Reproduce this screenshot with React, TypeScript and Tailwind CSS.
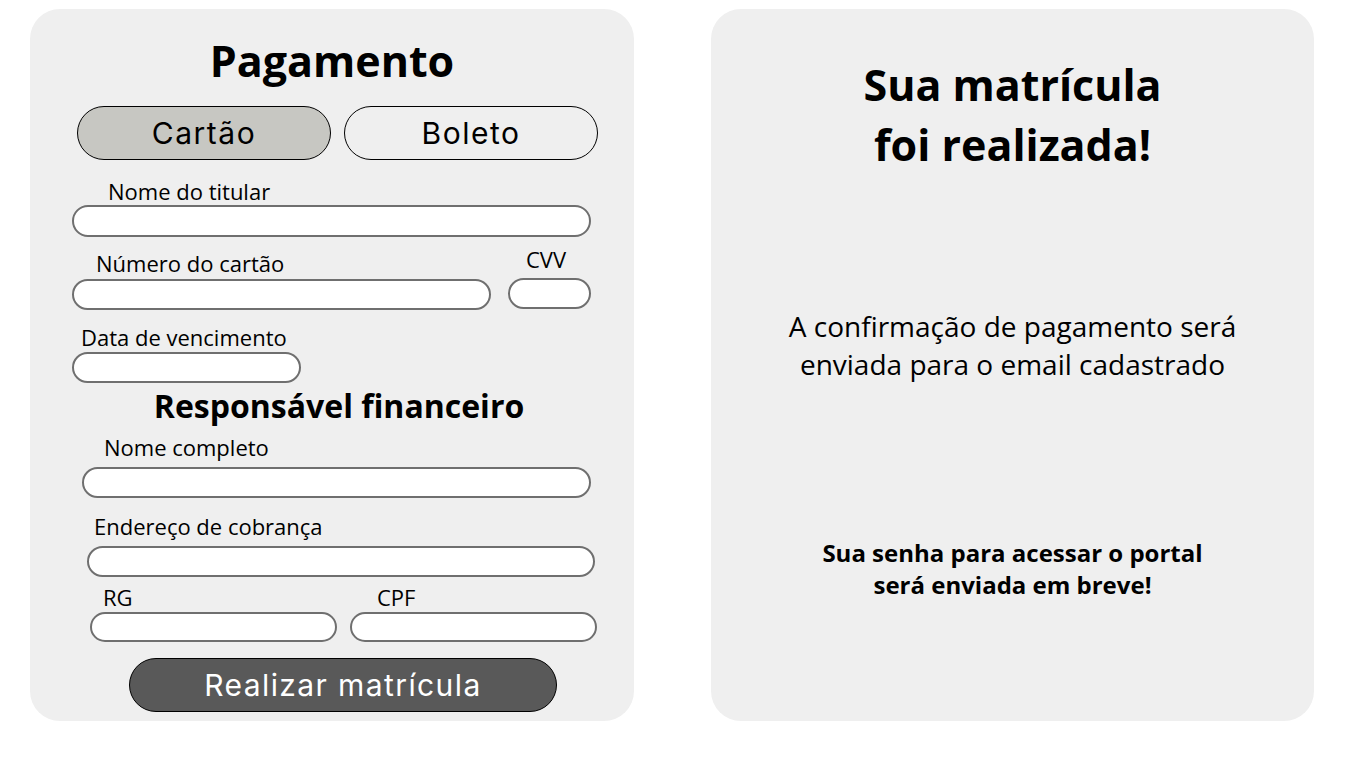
import React from "react";

const labelFont = { fontFamily: '"Open Sans", sans-serif' };

const Field: React.FC<{ className: string }> = ({ className }) => (
  <div className={`bg-white border-2 border-[#6f6f6f] rounded-full ${className}`} />
);

const Label: React.FC<{ text: string; className?: string }> = ({ text, className = "" }) => (
  <p className={`text-[22px] leading-[26px] text-black font-['Open_Sans',sans-serif] ${className}`}>{text}</p>
);

const PaymentCard: React.FC = () => {
  return (
    <div className="w-[604px] h-[712px] bg-[#efefef] rounded-[30px] flex flex-col font-['Open_Sans',sans-serif]">
      <h1 className="mt-[27px] text-center text-[43px] leading-[50px] font-bold text-black">Pagamento</h1>

      <div className="mt-[20px] ml-[47px] flex gap-[13px] font-['Inter',sans-serif]">
        <button className="w-[254px] h-[54px] rounded-full border border-black bg-[#c7c7c2] text-[30px] tracking-[1.5px] text-black">
          Cartão
        </button>
        <button className="w-[254px] h-[54px] rounded-full border border-black bg-transparent text-[30px] tracking-[1.5px] text-black">
          Boleto
        </button>
      </div>

      <Label text="Nome do titular" className="mt-[18px] ml-[78px]" />
      <Field className="mt-[1px] ml-[42px] w-[519px] h-[32px]" />

      <div className="mt-[9px] flex">
        <div className="flex flex-col">
          <Label text="Número do cartão" className="mt-[4px] ml-[66px]" />
          <Field className="mt-[3px] ml-[42px] w-[419px] h-[31px]" />
        </div>
        <div className="ml-[17px] flex flex-col">
          <Label text="CVV" className="ml-[18px]" />
          <Field className="mt-[6px] w-[83px] h-[31px]" />
        </div>
      </div>

      <Label text="Data de vencimento" className="mt-[14px] ml-[51px]" />
      <Field className="mt-[2px] ml-[42px] w-[229px] h-[31px]" />

      <h2 className="mt-[4px] ml-[14px] text-center text-[32px] leading-[38px] font-bold text-black">
        Responsável financeiro
      </h2>

      <Label text="Nome completo" className="mt-[9px] ml-[74px]" />
      <Field className="mt-[7px] ml-[52px] w-[509px] h-[31px]" />

      <Label text="Endereço de cobrança" className="mt-[15px] ml-[64px]" />
      <Field className="mt-[7px] ml-[57px] w-[508px] h-[31px]" />

      <div className="mt-[7px] ml-[60px] flex gap-[13px]">
        <div className="flex flex-col">
          <Label text="RG" className="ml-[13px]" />
          <Field className="mt-[2px] w-[247px] h-[30px]" />
        </div>
        <div className="flex flex-col">
          <Label text="CPF" className="ml-[27px]" />
          <Field className="mt-[2px] w-[247px] h-[30px]" />
        </div>
      </div>

      <button className="mt-[16px] ml-[99px] w-[428px] h-[54px] rounded-full border border-black bg-[#595959] text-white text-[30px] tracking-[1.4px] font-['Inter',sans-serif]">
        Realizar matrícula
      </button>
    </div>
  );
};

const SuccessCard: React.FC = () => {
  return (
    <div
      className="w-[603px] h-[712px] bg-[#efefef] rounded-[30px] flex flex-col items-center text-center text-black"
      style={labelFont}
    >
      <h1 className="mt-[46px] text-[43px] leading-[60px] font-bold">
        Sua matrícula
        <br />
        foi realizada!
      </h1>
      <p className="mt-[132px] text-[28px] leading-[38px]">
        A confirmação de pagamento será
        <br />
        enviada para o email cadastrado
      </p>
      <p className="mt-[154px] text-[24px] leading-[32px] font-bold">
        Sua senha para acessar o portal
        <br />
        será enviada em breve!
      </p>
    </div>
  );
};

export default function App() {
  return (
    <div className="w-[1366px] h-[768px] bg-white flex items-start pt-[9px] pl-[30px] gap-[77px]">
      <PaymentCard />
      <SuccessCard />
    </div>
  );
}
